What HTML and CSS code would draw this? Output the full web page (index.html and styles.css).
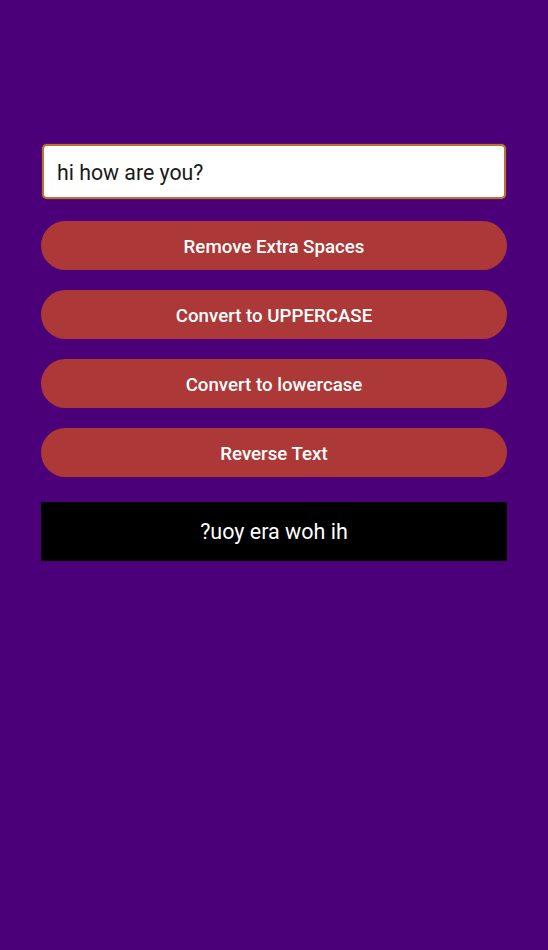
FILE: index.html
```html
<!DOCTYPE html>
<html>
<head>
<meta charset="utf-8">
<link rel="stylesheet" href="styles.css">
</head>
<body>
<main class="app">
  <div class="field">hi how are you?</div>
  <div class="actions">
    <button class="btn">Remove Extra Spaces</button>
    <button class="btn">Convert to UPPERCASE</button>
    <button class="btn">Convert to lowercase</button>
    <button class="btn">Reverse Text</button>
  </div>
  <div class="output">?uoy era woh ih</div>
</main>
</body>
</html>
```
FILE: styles.css
```css
html, body {
  margin: 0;
  padding: 0;
  height: 100%;
}
body {
  background: #4b0079;
  font-family: Roboto, "Liberation Sans", sans-serif;
}
.app {
  padding: 144px 41px 0 41px;
  display: flex;
  flex-direction: column;
}
.field {
  margin: 0 1px 0 1px;
  height: 55px;
  box-sizing: border-box;
  background: #fff;
  border: 2px solid #b8742a;
  border-radius: 5px;
  box-shadow: 0 0 1px #c8893a;
  padding: 2px 13px 0 13px;
  display: flex;
  align-items: center;
  font-size: 21.3px;
  color: #1a1a1a;
}
.actions {
  margin-top: 22px;
  display: flex;
  flex-direction: column;
  gap: 20px;
}
.btn {
  height: 49px;
  border: none;
  border-radius: 25px;
  background: #ad3838;
  color: #fff;
  font-family: Roboto, "Liberation Sans", sans-serif;
  font-weight: 500;
  font-size: 18.7px;
  padding: 3px 0 0 0;
}
.output {
  margin-top: 25px;
  height: 59px;
  background: #000;
  color: #fff;
  font-size: 21.5px;
  display: flex;
  align-items: center;
  justify-content: center;
}
```
